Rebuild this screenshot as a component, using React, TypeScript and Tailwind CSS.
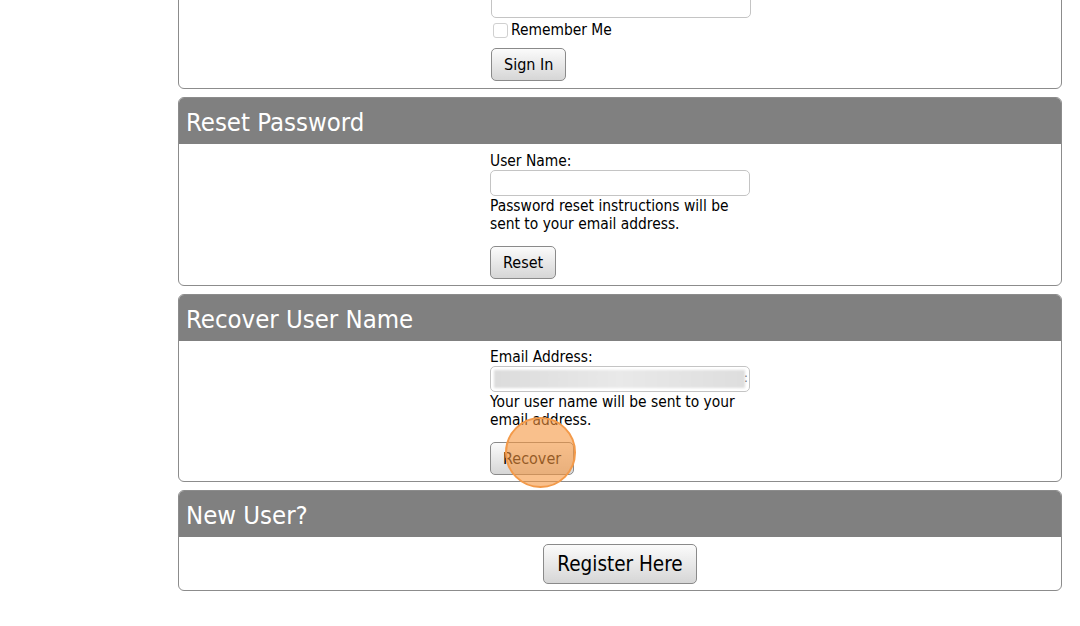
import React from "react";

const font = { fontFamily: '"DejaVu Sans Condensed", Tahoma, "DejaVu Sans", sans-serif' };

function Panel({ title, children }: { title?: string; children: React.ReactNode }) {
  return (
    <section className="rounded-[6px] border border-[#8c8c8c] bg-white overflow-hidden">
      {title && (
        <h2 className="h-[46px] bg-[#808080] px-[7px] text-[25.5px] leading-[48px] text-white">{title}</h2>
      )}
      {children}
    </section>
  );
}

function Btn({ children, big }: { children: React.ReactNode; big?: boolean }) {
  return (
    <button
      className={
        "rounded-[5px] border border-[#8a8a8a] bg-gradient-to-b from-[#fbfbfb] to-[#d6d6d6] text-black " +
        (big ? "h-[40px] px-[13px] text-[20.5px]" : "h-[33px] px-[12px] text-[16px]")
      }
    >
      {children}
    </button>
  );
}

function Field({ children }: { children?: React.ReactNode }) {
  return (
    <div className="relative h-[26px] w-[260px] overflow-hidden rounded-[5px] border border-[#c4c4c4] bg-white">
      {children}
    </div>
  );
}

export default function App() {
  return (
    <div className="relative h-[626px] w-[1080px] overflow-hidden bg-white text-[15.4px] text-black" style={font}>
      <div className="ml-[178px] mt-[-26px] flex w-[884px] flex-col gap-[8px]">
        {/* sign in panel, scrolled mostly out of view */}
        <Panel>
          <div className="flex justify-center pt-[17px] pb-[7px]">
            <div className="w-[260px] pl-[1px]">
              <div className="w-[258px]">
                <Field />
              </div>
              <label className="mt-[4px] flex items-center gap-[3px] leading-[17px]">
                <span className="ml-[2px] h-[15px] w-[15px] rounded-[3px] border border-[#d0d0d0] bg-white" />
                Remember Me
              </label>
              <div className="mt-[9px]">
                <Btn>Sign In</Btn>
              </div>
            </div>
          </div>
        </Panel>

        <Panel title="Reset Password">
          <div className="flex justify-center pt-[8px] pb-[6px]">
            <div className="w-[260px]">
              <div className="leading-[18px]">User Name:</div>
              <Field />
              <p className="mt-[1px] leading-[18px]">
                Password reset instructions will be sent to your email address.
              </p>
              <div className="mt-[13px]">
                <Btn>Reset</Btn>
              </div>
            </div>
          </div>
        </Panel>

        <Panel title="Recover User Name">
          <div className="flex justify-center pt-[7px] pb-[6px]">
            <div className="w-[260px]">
              <div className="leading-[18px]">Email Address:</div>
              <Field>
                <div className="absolute left-[3px] right-[4px] top-[3px] h-[18px] bg-gradient-to-r from-[#dcdcdc] via-[#e9e9e9] to-[#dedede] blur-[1px]" />
                <span className="absolute right-[1px] top-[1px] text-[13px] text-[#777]">:</span>
              </Field>
              <p className="mt-[1px] leading-[18px]">Your user name will be sent to your email address.</p>
              <div className="mt-[13px]">
                <Btn>Recover</Btn>
              </div>
            </div>
          </div>
        </Panel>

        <Panel title="New User?">
          <div className="flex justify-center pt-[7px] pb-[6px]">
            <Btn big>Register Here</Btn>
          </div>
        </Panel>
      </div>

      {/* click highlight */}
      <div className="absolute left-[505px] top-[417px] h-[71px] w-[71px] rounded-full border-2 border-[#f39a4a] bg-[#f5963f]/60" />
    </div>
  );
}
